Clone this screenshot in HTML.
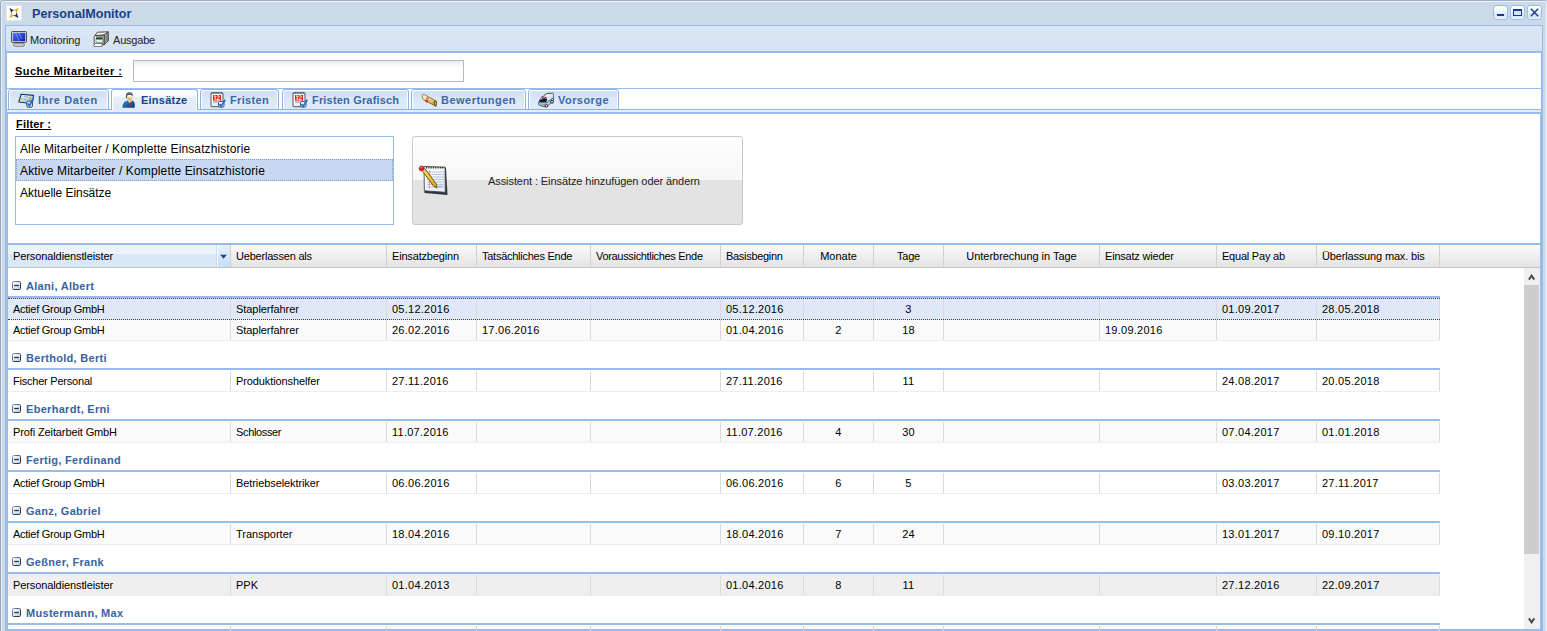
<!DOCTYPE html><html><head><meta charset="utf-8"><title>PersonalMonitor</title><style>
*{box-sizing:border-box;margin:0;padding:0}
html,body{width:1547px;height:631px;overflow:hidden;background:#ccd9e7}
body{font-family:"Liberation Sans",sans-serif;font-size:11px;color:#000;position:relative}
.abs{position:absolute}
.t{position:absolute;white-space:nowrap;line-height:1}
</style></head><body>
<div class="abs" style="left:0px;top:0px;width:1547px;height:631px;background:#ccd9e7;border-radius:4px 4px 0 0;border-top:1px solid #9eafc6;border-left:1px solid #94a6bf"></div>
<div class="abs" style="left:1px;top:1px;width:1546px;height:630px;border-radius:3px 3px 0 0;border-top:1px solid #eef3f8;border-left:1px solid #e9eff6;border-right:1px solid #eef2f8"></div>
<div class="abs" style="left:6px;top:5px;width:16px;height:16px;background:#fff;border:1px solid #e4e6ec;box-shadow:inset 0 0 0 1px #fff"></div>
<svg class="abs" style="left:6px;top:5px" width="16" height="16" viewBox="0 0 16 16"><path d="M3.5 3 L8.6 5.4 L7.2 6.6 L5.4 8.6 Z" fill="#13305c"/>
<path d="M12.5 3 L7.4 5.4 L8.8 6.6 L10.6 8.6 Z" fill="#f6a800"/>
<path d="M3.5 13 L5.4 7.4 L7.2 9.4 L8.6 10.6 Z" fill="#f6a800"/>
<path d="M12.5 13 L10.6 7.4 L8.8 9.4 L7.4 10.6 Z" fill="#13305c"/>
<circle cx="8" cy="8" r="2.4" fill="#fff"/></svg>
<div class="t" style="left:32px;top:8px;font-size:12.6px;font-weight:bold;color:#15428b">PersonalMonitor</div>
<div class="abs" style="left:1493px;top:5px;width:15px;height:15px;border:1px solid #99bbe8;border-radius:3px;background:linear-gradient(#fff 0,#fff 2px,#f2f8fe 3px,#e6f0fc 7px,#d5e5fa 8px,#dcebfc 12px,#fff 13px)"></div>
<div class="abs" style="left:1497px;top:14px;width:7px;height:2px;background:#1d3590"></div>
<div class="abs" style="left:1510px;top:5px;width:15px;height:15px;border:1px solid #99bbe8;border-radius:3px;background:linear-gradient(#fff 0,#fff 2px,#f2f8fe 3px,#e6f0fc 7px,#d5e5fa 8px,#dcebfc 12px,#fff 13px)"></div>
<div class="abs" style="left:1513px;top:9px;width:9px;height:7px;border:1px solid #1d3590;border-top-width:2px;background:#d3e2f8"></div>
<div class="abs" style="left:1527px;top:5px;width:15px;height:15px;border:1px solid #99bbe8;border-radius:3px;background:linear-gradient(#fff 0,#fff 2px,#f2f8fe 3px,#e6f0fc 7px,#d5e5fa 8px,#dcebfc 12px,#fff 13px)"></div>
<svg class="abs" style="left:1530px;top:8px" width="9" height="9" viewBox="0 0 9 9"><path d="M0.8 0.8L8.2 8.2M8.2 0.8L0.8 8.2" stroke="#1d3590" stroke-width="1.4"/></svg>
<div class="abs" style="left:5px;top:25px;width:1538px;height:28px;border:1px solid #99bbe8;border-bottom-width:2px;background:linear-gradient(#dce7f5,#d5e2f2)"></div>
<svg class="abs" style="left:11px;top:31px" width="16" height="16" viewBox="0 0 16 16"><defs><linearGradient id="scr" x1="0" y1="0" x2="1" y2="1"><stop offset="0" stop-color="#5a78e8"/><stop offset="1" stop-color="#0018c8"/></linearGradient></defs>
<rect x="0.5" y="0.5" width="15" height="11" rx="0.8" fill="#d8d8d8" stroke="#505050"/>
<rect x="1.8" y="1.8" width="12.4" height="8.4" fill="url(#scr)"/>
<path d="M4.5 1.8L8.5 10.2M7.5 1.8L11 8" stroke="#8aa0ff" stroke-width="1" opacity="0.8"/>
<path d="M2.5 13.2 C4 12, 12 12, 13.5 13.2 L13 15 C11 15.6, 5 15.6, 3 15Z" fill="#d0d0d0" stroke="#606060" stroke-width="0.7"/></svg>
<div class="t" style="left:30px;top:35px;font-size:11px;color:#222;letter-spacing:-0.1px">Monitoring</div>
<svg class="abs" style="left:93px;top:31px" width="16" height="16" viewBox="0 0 16 16"><defs><linearGradient id="prf" x1="0" y1="0" x2="1" y2="0"><stop offset="0" stop-color="#f4f4f4"/><stop offset="1" stop-color="#b8b8b8"/></linearGradient>
<linearGradient id="prs" x1="0" y1="0" x2="1" y2="0"><stop offset="0" stop-color="#c8c8c8"/><stop offset="1" stop-color="#8a8a8a"/></linearGradient></defs>
<path d="M4.5 1.2 L15.2 0.8 L11.2 4.2 L1.8 4.6 Z" fill="#ececec" stroke="#2a2a2a" stroke-width="0.8" stroke-linejoin="round"/>
<path d="M11.2 4.2 L15.2 0.8 L15.4 9.8 L11 13.8 Z" fill="url(#prs)" stroke="#2a2a2a" stroke-width="0.8" stroke-linejoin="round"/>
<path d="M12.2 5 V11.5 M13.3 4 V10.6 M14.4 3 V9.6" stroke="#6a6a6a" stroke-width="0.5"/>
<path d="M1.8 4.6 L11.2 4.2 L11 13.8 L2 13.8 C1.4 13.8, 1.2 13.2, 1.2 12.6 L1.2 5.4 Z" fill="url(#prf)" stroke="#2a2a2a" stroke-width="0.8" stroke-linejoin="round"/>
<rect x="3" y="5.6" width="6.6" height="1.2" fill="#3a6a4a"/>
<rect x="3" y="7" width="6.6" height="1.4" fill="#2a3a5a"/>
<rect x="3" y="8.6" width="6.6" height="2.6" fill="#e8f0e8" stroke="#4a8a5a" stroke-width="0.5"/>
<path d="M0.6 14.4 L2.4 12.4 L9.6 12.4 L8.6 15.6 L1.2 15.6 Z" fill="#fafafa" stroke="#3a3a3a" stroke-width="0.7" stroke-linejoin="round"/></svg>
<div class="t" style="left:113px;top:35px;font-size:11px;color:#222;letter-spacing:-0.2px">Ausgabe</div>
<div class="abs" style="left:5px;top:53px;width:1538px;height:578px;background:#fff;border-left:2px solid #99bbe8;border-right:2px solid #99bbe8"></div>
<div class="t" style="left:15px;top:66px;font-size:11px;font-weight:bold;text-decoration:underline;letter-spacing:0.44px">Suche Mitarbeiter :</div>
<div class="abs" style="left:133px;top:60px;width:331px;height:22px;border:1px solid #b5b8c8;background:linear-gradient(#e9ecef 0,#fbfbfb 5px,#fff 8px)"></div>
<div class="abs" style="left:7px;top:88px;width:1534px;height:1px;background:#99bbe8"></div>
<div class="abs" style="left:7px;top:109px;width:1534px;height:1px;background:#8db2e3"></div>
<div class="abs" style="left:7px;top:110px;width:1534px;height:2px;background:#e4eefb"></div>
<div class="abs" style="left:5px;top:112px;width:1538px;height:519px;border-top:2px solid #99bbe8;border-left:3px solid #99bbe8;border-right:3px solid #99bbe8"></div>
<div class="abs" style="left:8px;top:89px;width:101px;height:21px;border:1px solid #8db2e3;border-radius:3px 3px 0 0;background:linear-gradient(#d2e0f4 0,#d6e3f5 7px,#dce8f8 8px,#e0ebfa 100%);box-shadow:inset 1px 1px 0 #fff,inset -1px 0 0 #fff"></div>
<div class="t" style="left:38px;top:95px;font-size:11px;font-weight:bold;letter-spacing:0.6px;color:#3b68a6">Ihre Daten</div>
<svg class="abs" style="left:18px;top:92px" width="16" height="16" viewBox="0 0 16 16"><defs><linearGradient id="cdg" x1="0" y1="0" x2="1" y2="1"><stop offset="0" stop-color="#e8f4fe"/><stop offset="1" stop-color="#8cc0ec"/></linearGradient></defs>
<path d="M3.2 2.2 L15.6 3.4 L14.2 11.8 L0.8 10 Z" fill="url(#cdg)" stroke="#14365e" stroke-width="1.1" stroke-linejoin="round"/>
<circle cx="3.6" cy="6.8" r="1.1" fill="#f4c800"/>
<path d="M6 4.6 L10 5 M5.6 7.4 L8.6 7.7" stroke="#8ab0d6" stroke-width="0.9"/>
<path d="M11.4 5.6 L13.6 4.8 L12.6 7.8 L10.6 7.4 Z" fill="#e0a020"/>
<rect x="8.8" y="9.2" width="5.6" height="6" rx="1.2" fill="#f2f6fa" stroke="#26323e" stroke-width="0.9"/>
<path d="M9.8 11.4 L11.4 13.8 L15.2 6.6" stroke="#1a6cd0" stroke-width="1.8" fill="none" stroke-linejoin="round"/></svg>
<div class="abs" style="left:111px;top:89px;width:87px;height:21px;border:1px solid #8db2e3;border-bottom:none;border-radius:3px 3px 0 0;background:linear-gradient(#fff 0,#fafcfe 5px,#e6eefa 8px,#dfe9f8 100%);box-shadow:inset 1px 1px 0 #fff,inset -1px 0 0 #fff"></div>
<div class="t" style="left:141px;top:95px;font-size:11px;font-weight:bold;letter-spacing:0.23px;color:#15428b">Einsätze</div>
<svg class="abs" style="left:121px;top:92px" width="16" height="16" viewBox="0 0 16 16"><defs><linearGradient id="suit" x1="0" y1="0" x2="1" y2="1"><stop offset="0" stop-color="#4a8ccc"/><stop offset="0.6" stop-color="#1a5596"/><stop offset="1" stop-color="#0c3062"/></linearGradient>
<linearGradient id="face" x1="0" y1="0" x2="0" y2="1"><stop offset="0" stop-color="#ffe7a0"/><stop offset="1" stop-color="#d99a3a"/></linearGradient></defs>
<path d="M1.5 15.8 C1.2 11.5, 3 9.2, 6.5 8.4 L9 10 L11.5 8.6 C13.5 9.5, 14.2 11.5, 13.6 15.8 Z" fill="url(#suit)"/>
<path d="M7 8.8 L9.2 11.5 L10.8 8.8 Z" fill="#fff"/>
<path d="M8.8 9.6 L9.8 9.6 L10.4 14.2 L9.5 15 Z" fill="#c42c24"/>
<path d="M5.6 4.5 C5.6 7.5, 7 8.8, 8.6 8.8 C10.4 8.8, 11.6 7.2, 11.6 4.5 Z" fill="url(#face)"/>
<path d="M5 6 C4.4 2, 6 0.3, 8.5 0.3 C11 0.3, 12.2 1.6, 11.8 4.2 C11 3, 8.5 2.6, 6.4 3.2 C6 4, 5.9 5, 6 6.4 Z" fill="#46566a"/>
<path d="M6.5 1.6 C8 1, 10 1.2, 11 2" stroke="#8a9ab0" stroke-width="0.6" fill="none"/></svg>
<div class="abs" style="left:200px;top:89px;width:79px;height:21px;border:1px solid #8db2e3;border-radius:3px 3px 0 0;background:linear-gradient(#d2e0f4 0,#d6e3f5 7px,#dce8f8 8px,#e0ebfa 100%);box-shadow:inset 1px 1px 0 #fff,inset -1px 0 0 #fff"></div>
<div class="t" style="left:230px;top:95px;font-size:11px;font-weight:bold;letter-spacing:0.33px;color:#3b68a6">Fristen</div>
<svg class="abs" style="left:210px;top:92px" width="16" height="16" viewBox="0 0 16 16"><defs><linearGradient id="calg" x1="0" y1="0" x2="1" y2="1"><stop offset="0" stop-color="#ffffff"/><stop offset="1" stop-color="#e2e6ea"/></linearGradient></defs>
<path d="M1 1 H13 V14.5 H1 Z" fill="url(#calg)" stroke="#5a5a5a" stroke-width="1"/>
<path d="M13.5 1.5 V15 H1.5" stroke="#9a9a9a" stroke-width="0.8" fill="none"/>
<path d="M1.5 0.8 H12.5" stroke="#333" stroke-width="1" stroke-dasharray="1 0.6"/>
<rect x="3" y="3" width="8" height="5.6" fill="#e02a0a"/>
<path d="M4.2 4.3 L5.2 3.7 V8" stroke="#fff" stroke-width="1" fill="none"/>
<path d="M6.6 4.5 C6.9 3.5, 9.6 3.4, 9.3 4.9 C9.1 5.8, 7 6.6, 6.8 7.8 H9.8" stroke="#fff" stroke-width="1" fill="none"/>
<path d="M3 10 H8" stroke="#5c9ae0" stroke-width="1"/>
<rect x="8.5" y="9.5" width="5.5" height="5.5" rx="1.2" fill="#f4f8fc" stroke="#3a4450" stroke-width="0.9"/>
<path d="M9.4 12 L11.2 14.3 L15.3 7.6" stroke="#1a6cd0" stroke-width="1.7" fill="none" stroke-linejoin="round"/></svg>
<div class="abs" style="left:282px;top:89px;width:127px;height:21px;border:1px solid #8db2e3;border-radius:3px 3px 0 0;background:linear-gradient(#d2e0f4 0,#d6e3f5 7px,#dce8f8 8px,#e0ebfa 100%);box-shadow:inset 1px 1px 0 #fff,inset -1px 0 0 #fff"></div>
<div class="t" style="left:312px;top:95px;font-size:11px;font-weight:bold;letter-spacing:0.18px;color:#3b68a6">Fristen Grafisch</div>
<svg class="abs" style="left:292px;top:92px" width="16" height="16" viewBox="0 0 16 16"><defs><linearGradient id="calg" x1="0" y1="0" x2="1" y2="1"><stop offset="0" stop-color="#ffffff"/><stop offset="1" stop-color="#e2e6ea"/></linearGradient></defs>
<path d="M1 1 H13 V14.5 H1 Z" fill="url(#calg)" stroke="#5a5a5a" stroke-width="1"/>
<path d="M13.5 1.5 V15 H1.5" stroke="#9a9a9a" stroke-width="0.8" fill="none"/>
<path d="M1.5 0.8 H12.5" stroke="#333" stroke-width="1" stroke-dasharray="1 0.6"/>
<rect x="3" y="3" width="8" height="5.6" fill="#e02a0a"/>
<path d="M4.2 4.3 L5.2 3.7 V8" stroke="#fff" stroke-width="1" fill="none"/>
<path d="M6.6 4.5 C6.9 3.5, 9.6 3.4, 9.3 4.9 C9.1 5.8, 7 6.6, 6.8 7.8 H9.8" stroke="#fff" stroke-width="1" fill="none"/>
<path d="M3 10 H8" stroke="#5c9ae0" stroke-width="1"/>
<rect x="8.5" y="9.5" width="5.5" height="5.5" rx="1.2" fill="#f4f8fc" stroke="#3a4450" stroke-width="0.9"/>
<path d="M9.4 12 L11.2 14.3 L15.3 7.6" stroke="#1a6cd0" stroke-width="1.7" fill="none" stroke-linejoin="round"/></svg>
<div class="abs" style="left:411px;top:89px;width:115px;height:21px;border:1px solid #8db2e3;border-radius:3px 3px 0 0;background:linear-gradient(#d2e0f4 0,#d6e3f5 7px,#dce8f8 8px,#e0ebfa 100%);box-shadow:inset 1px 1px 0 #fff,inset -1px 0 0 #fff"></div>
<div class="t" style="left:441px;top:95px;font-size:11px;font-weight:bold;letter-spacing:0.48px;color:#3b68a6">Bewertungen</div>
<svg class="abs" style="left:421px;top:92px" width="16" height="16" viewBox="0 0 16 16"><g transform="translate(0,1)"><defs><linearGradient id="scg" x1="0" y1="0" x2="0.3" y2="1"><stop offset="0" stop-color="#fffbe0"/><stop offset="0.45" stop-color="#f6e08a"/><stop offset="1" stop-color="#c89a30"/></linearGradient></defs>
<path d="M1.3 3.2 C1 2, 2.2 1.2, 3.2 1.6 L15 7.8 C15.8 8.6, 15.6 12, 14.6 13.2 L2.6 6.8 C1.6 6.2, 1.2 4.8, 1.3 3.2 Z" fill="url(#scg)" stroke="#5a4a2a" stroke-width="0.7" stroke-linejoin="round"/>
<ellipse cx="14.6" cy="10.5" rx="1.2" ry="2.7" transform="rotate(-15 14.6 10.5)" fill="#d4a838" stroke="#4a3a1a" stroke-width="0.7"/>
<circle cx="6.6" cy="5.8" r="1.7" fill="#ec7a7a"/>
<circle cx="5.8" cy="8" r="1.6" fill="#c43c3c"/>
<circle cx="6.8" cy="6.6" r="1" fill="#f49a9a"/></g></svg>
<div class="abs" style="left:528px;top:89px;width:91px;height:21px;border:1px solid #8db2e3;border-radius:3px 3px 0 0;background:linear-gradient(#d2e0f4 0,#d6e3f5 7px,#dce8f8 8px,#e0ebfa 100%);box-shadow:inset 1px 1px 0 #fff,inset -1px 0 0 #fff"></div>
<div class="t" style="left:558px;top:95px;font-size:11px;font-weight:bold;letter-spacing:0.45px;color:#3b68a6">Vorsorge</div>
<svg class="abs" style="left:538px;top:92px" width="16" height="16" viewBox="0 0 16 16"><defs><linearGradient id="ambg" x1="0" y1="0" x2="1" y2="1"><stop offset="0" stop-color="#ffffff"/><stop offset="1" stop-color="#c4c8cc"/></linearGradient></defs>
<path d="M2.5 6.6 L8.6 1.6 L14.6 1.2 C15.6 1.4, 15.8 2.2, 15.7 3.4 L15.5 8.2 L10 13.6 L7.5 14.8 L1.4 13.4 C0.6 13, 0.4 12, 0.7 10.6 Z" fill="url(#ambg)" stroke="#2a2a2a" stroke-width="0.8" stroke-linejoin="round"/>
<path d="M2 8.2 L5 6 L9.2 6.8 L8.4 10.4 L1.4 10 Z" fill="#10161e"/>
<path d="M3 8 L5.6 6.6" stroke="#4a6a9a" stroke-width="0.6"/>
<path d="M0.8 10.4 L8.6 11 L15.5 5.6" stroke="#2a86d8" stroke-width="1.1" fill="none"/>
<rect x="3.6" y="4.2" width="1.6" height="1.5" fill="#d81c1c"/><rect x="5.3" y="4.5" width="1.5" height="1.3" fill="#2a7ae0"/><rect x="6.9" y="4.9" width="1.6" height="1.5" fill="#d81c1c"/>
<path d="M1.2 11.8 L7 12.6" stroke="#555" stroke-width="0.6"/>
<circle cx="14" cy="9.8" r="1.4" fill="#fff" stroke="#1a1a1a" stroke-width="1"/>
<circle cx="8.4" cy="13.8" r="1.3" fill="#fff" stroke="#1a1a1a" stroke-width="1"/></svg>
<div class="t" style="left:16px;top:119px;font-size:11px;font-weight:bold;text-decoration:underline;letter-spacing:0.2px">Filter :</div>
<div class="abs" style="left:15px;top:136px;width:379px;height:89px;border:1px solid #99bbe8;background:#fff"></div>
<div class="abs" style="left:16px;top:159px;width:377px;height:22px;background:#c8d8f0;border:1px dotted #7f9fd0"></div>
<div class="t" style="left:20px;top:143px;font-size:12px;letter-spacing:0.11px">Alle Mitarbeiter / Komplette Einsatzhistorie</div>
<div class="t" style="left:20px;top:165px;font-size:12px;letter-spacing:0.15px">Aktive Mitarbeiter / Komplette Einsatzhistorie</div>
<div class="t" style="left:20px;top:187px;font-size:12px;letter-spacing:-0.06px">Aktuelle Einsätze</div>
<div class="abs" style="left:412px;top:136px;width:331px;height:89px;border:1px solid #c9c9c9;border-radius:3px;background:linear-gradient(#fdfdfd 0,#f7f7f7 50%,#e3e3e3 50%,#e3e3e3 100%)"></div>
<div class="t" style="left:488px;top:176px;font-size:11px;color:#222;letter-spacing:-0.08px">Assistent : Einsätze hinzufügen oder ändern</div>
<svg class="abs" style="left:418px;top:164px" width="32" height="32" viewBox="0 0 32 32"><defs><linearGradient id="pg" x1="0" y1="0" x2="1" y2="1"><stop offset="0" stop-color="#ffffff"/><stop offset="1" stop-color="#e6ebf2"/></linearGradient>
<linearGradient id="pen" x1="0" y1="0" x2="1" y2="1"><stop offset="0" stop-color="#ffe45a"/><stop offset="1" stop-color="#e0a000"/></linearGradient></defs>
<path d="M6 2.5 L28 3.5 L29.5 31 L6.5 29 Z" fill="#2e3440"/>
<path d="M6 2.5 L27 3.2 L27.3 28.3 L6.3 26.8 Z" fill="url(#pg)" stroke="#3a4048" stroke-width="0.8"/>
<path d="M9 8H26M9 10.5H26M9 13H26M9 15.5H26M9 18H26M9 20.5H26M9 23H26" stroke="#a6bcdc" stroke-width="0.8"/>
<path d="M11.5 6 V25" stroke="#f29090" stroke-width="0.9"/>
<path d="M8 3.6H26.5" stroke="#222" stroke-width="1.6" stroke-dasharray="1.1 1.2"/>
<path d="M4.6 7.2 L7.2 4.8 L18.6 20.4 L18.8 24 L15.8 22.4 Z" fill="url(#pen)" stroke="#4a3a10" stroke-width="0.8" stroke-linejoin="round"/>
<path d="M2.8 6.2 L5.4 3.8 L7.6 6 L5 8.4 Z" fill="#f4f4f4" stroke="#555" stroke-width="0.6"/>
<circle cx="3.6" cy="4.4" r="2.5" fill="#e41c1c" stroke="#8a1010" stroke-width="0.5"/>
<circle cx="3" cy="3.6" r="0.8" fill="#ff9a9a"/>
<path d="M18.5 23.5 C20 22.8, 22 22.5, 24 22" stroke="#888" stroke-width="0.8" fill="none"/></svg>
<div class="abs" style="left:8px;top:243px;width:1532px;height:2px;background:#99bbe8"></div>
<div class="abs" style="left:8px;top:245px;width:1532px;height:23px;background:linear-gradient(#fafafa 0,#eeeeef 55%,#e3e3e5 100%);border-bottom:1px solid #c4c4c4"></div>
<div class="abs" style="left:8px;top:245px;width:222px;height:22px;background:linear-gradient(#ecf3fd 0,#ebf3fd 9px,#dae7f8 9px,#d9e7f8 100%)"></div>
<div class="abs" style="left:216px;top:245px;width:14px;height:22px;background:linear-gradient(#e6f1fd,#c6def9);border-left:1px solid #c9daf0;box-shadow:inset 1px 0 0 #fff"></div>
<svg class="abs" style="left:219px;top:254px" width="9" height="6" viewBox="0 0 9 6"><path d="M0.8 0.6H8.2L4.5 5Z" fill="#15428b" stroke="#fff" stroke-width="0.6" stroke-opacity="0.6"/></svg>
<div class="abs" style="left:230px;top:245px;width:1px;height:22px;background:#d0d0d0"></div>
<div class="abs" style="left:386px;top:245px;width:1px;height:22px;background:#d0d0d0"></div>
<div class="abs" style="left:476px;top:245px;width:1px;height:22px;background:#d0d0d0"></div>
<div class="abs" style="left:590px;top:245px;width:1px;height:22px;background:#d0d0d0"></div>
<div class="abs" style="left:720px;top:245px;width:1px;height:22px;background:#d0d0d0"></div>
<div class="abs" style="left:803px;top:245px;width:1px;height:22px;background:#d0d0d0"></div>
<div class="abs" style="left:873px;top:245px;width:1px;height:22px;background:#d0d0d0"></div>
<div class="abs" style="left:943px;top:245px;width:1px;height:22px;background:#d0d0d0"></div>
<div class="abs" style="left:1099px;top:245px;width:1px;height:22px;background:#d0d0d0"></div>
<div class="abs" style="left:1216px;top:245px;width:1px;height:22px;background:#d0d0d0"></div>
<div class="abs" style="left:1316px;top:245px;width:1px;height:22px;background:#d0d0d0"></div>
<div class="abs" style="left:1439px;top:245px;width:1px;height:22px;background:#d0d0d0"></div>
<div class="t" style="left:13px;top:251px;font-size:11px;letter-spacing:-0.1px">Personaldienstleister</div>
<div class="t" style="left:236px;top:251px;font-size:11px;letter-spacing:-0.2px">Ueberlassen als</div>
<div class="t" style="left:392px;top:251px;font-size:11px;letter-spacing:-0.175px">Einsatzbeginn</div>
<div class="t" style="left:482px;top:251px;font-size:11px;letter-spacing:-0.26px">Tatsächliches Ende</div>
<div class="t" style="left:596px;top:251px;font-size:11px;letter-spacing:-0.32px">Voraussichtliches Ende</div>
<div class="t" style="left:726px;top:251px;font-size:11px;letter-spacing:-0.3px">Basisbeginn</div>
<div class="t" style="left:804px;width:69px;text-align:center;top:251px;font-size:11px;letter-spacing:0px">Monate</div>
<div class="t" style="left:874px;width:69px;text-align:center;top:251px;font-size:11px;letter-spacing:-0.2px">Tage</div>
<div class="t" style="left:944px;width:155px;text-align:center;top:251px;font-size:11px;letter-spacing:-0.04px">Unterbrechung in Tage</div>
<div class="t" style="left:1105px;top:251px;font-size:11px;letter-spacing:-0.2px">Einsatz wieder</div>
<div class="t" style="left:1222px;top:251px;font-size:11px;letter-spacing:-0.22px">Equal Pay ab</div>
<div class="t" style="left:1322px;top:251px;font-size:11px;letter-spacing:-0.16px">Überlassung max. bis</div>
<svg class="abs" style="left:12px;top:281px" width="9" height="9" viewBox="0 0 9 9"><defs><linearGradient id="gi0" x1="0" y1="0" x2="1" y2="1"><stop offset="0" stop-color="#ffffff"/><stop offset="1" stop-color="#bccadc"/></linearGradient><linearGradient id="gs0" x1="0" y1="0" x2="1" y2="1"><stop offset="0" stop-color="#8a9ab2"/><stop offset="0.6" stop-color="#34465e"/><stop offset="1" stop-color="#22344c"/></linearGradient></defs><rect x="0.5" y="0.5" width="8" height="8" rx="1.2" fill="url(#gi0)" stroke="url(#gs0)"/><path d="M2.2 4.5H6.8" stroke="#1e2f48" stroke-width="1.2"/></svg>
<div class="t" style="left:26px;top:281px;font-size:11px;font-weight:bold;letter-spacing:0.3px;color:#3764a0">Alani, Albert</div>
<div class="abs" style="left:8px;top:296px;width:1432px;height:2px;background:#99bbe8"></div>
<div class="abs" style="left:8px;top:298px;width:1432px;height:22px;background:#dfe8f6;border-top:1px dotted #404040;border-bottom:1px dotted #404040;z-index:2"></div>
<div class="abs" style="left:230px;top:299px;width:1px;height:20px;background:#dadada;z-index:3"></div>
<div class="abs" style="left:386px;top:299px;width:1px;height:20px;background:#dadada;z-index:3"></div>
<div class="abs" style="left:476px;top:299px;width:1px;height:20px;background:#dadada;z-index:3"></div>
<div class="abs" style="left:590px;top:299px;width:1px;height:20px;background:#dadada;z-index:3"></div>
<div class="abs" style="left:720px;top:299px;width:1px;height:20px;background:#dadada;z-index:3"></div>
<div class="abs" style="left:803px;top:299px;width:1px;height:20px;background:#dadada;z-index:3"></div>
<div class="abs" style="left:873px;top:299px;width:1px;height:20px;background:#dadada;z-index:3"></div>
<div class="abs" style="left:943px;top:299px;width:1px;height:20px;background:#dadada;z-index:3"></div>
<div class="abs" style="left:1099px;top:299px;width:1px;height:20px;background:#dadada;z-index:3"></div>
<div class="abs" style="left:1216px;top:299px;width:1px;height:20px;background:#dadada;z-index:3"></div>
<div class="abs" style="left:1316px;top:299px;width:1px;height:20px;background:#dadada;z-index:3"></div>
<div class="abs" style="left:1439px;top:299px;width:1px;height:20px;background:#dadada;z-index:3"></div>
<div class="t" style="left:13px;top:304px;font-size:11px;letter-spacing:-0.26px;z-index:4">Actief Group GmbH</div>
<div class="t" style="left:236px;top:304px;font-size:11px;letter-spacing:-0.06px;z-index:4">Staplerfahrer</div>
<div class="t" style="left:392px;top:304px;font-size:11px;letter-spacing:0.25px;z-index:4">05.12.2016</div>
<div class="t" style="left:726px;top:304px;font-size:11px;letter-spacing:0.25px;z-index:4">05.12.2016</div>
<div class="t" style="left:874px;width:69px;text-align:center;top:304px;font-size:11px;letter-spacing:0.25px;z-index:4">3</div>
<div class="t" style="left:1222px;top:304px;font-size:11px;letter-spacing:0.25px;z-index:4">01.09.2017</div>
<div class="t" style="left:1322px;top:304px;font-size:11px;letter-spacing:0.25px;z-index:4">28.05.2018</div>
<div class="abs" style="left:8px;top:319px;width:1432px;height:22px;background:#fafafa;border-bottom:1px solid #ededed"></div>
<div class="abs" style="left:230px;top:320px;width:1px;height:20px;background:#dadada;z-index:3"></div>
<div class="abs" style="left:386px;top:320px;width:1px;height:20px;background:#dadada;z-index:3"></div>
<div class="abs" style="left:476px;top:320px;width:1px;height:20px;background:#dadada;z-index:3"></div>
<div class="abs" style="left:590px;top:320px;width:1px;height:20px;background:#dadada;z-index:3"></div>
<div class="abs" style="left:720px;top:320px;width:1px;height:20px;background:#dadada;z-index:3"></div>
<div class="abs" style="left:803px;top:320px;width:1px;height:20px;background:#dadada;z-index:3"></div>
<div class="abs" style="left:873px;top:320px;width:1px;height:20px;background:#dadada;z-index:3"></div>
<div class="abs" style="left:943px;top:320px;width:1px;height:20px;background:#dadada;z-index:3"></div>
<div class="abs" style="left:1099px;top:320px;width:1px;height:20px;background:#dadada;z-index:3"></div>
<div class="abs" style="left:1216px;top:320px;width:1px;height:20px;background:#dadada;z-index:3"></div>
<div class="abs" style="left:1316px;top:320px;width:1px;height:20px;background:#dadada;z-index:3"></div>
<div class="abs" style="left:1439px;top:320px;width:1px;height:20px;background:#dadada;z-index:3"></div>
<div class="t" style="left:13px;top:325px;font-size:11px;letter-spacing:-0.26px;z-index:4">Actief Group GmbH</div>
<div class="t" style="left:236px;top:325px;font-size:11px;letter-spacing:-0.06px;z-index:4">Staplerfahrer</div>
<div class="t" style="left:392px;top:325px;font-size:11px;letter-spacing:0.25px;z-index:4">26.02.2016</div>
<div class="t" style="left:482px;top:325px;font-size:11px;letter-spacing:0.25px;z-index:4">17.06.2016</div>
<div class="t" style="left:726px;top:325px;font-size:11px;letter-spacing:0.25px;z-index:4">01.04.2016</div>
<div class="t" style="left:804px;width:69px;text-align:center;top:325px;font-size:11px;letter-spacing:0.25px;z-index:4">2</div>
<div class="t" style="left:874px;width:69px;text-align:center;top:325px;font-size:11px;letter-spacing:0.25px;z-index:4">18</div>
<div class="t" style="left:1105px;top:325px;font-size:11px;letter-spacing:0.25px;z-index:4">19.09.2016</div>
<svg class="abs" style="left:12px;top:353px" width="9" height="9" viewBox="0 0 9 9"><defs><linearGradient id="gi1" x1="0" y1="0" x2="1" y2="1"><stop offset="0" stop-color="#ffffff"/><stop offset="1" stop-color="#bccadc"/></linearGradient><linearGradient id="gs1" x1="0" y1="0" x2="1" y2="1"><stop offset="0" stop-color="#8a9ab2"/><stop offset="0.6" stop-color="#34465e"/><stop offset="1" stop-color="#22344c"/></linearGradient></defs><rect x="0.5" y="0.5" width="8" height="8" rx="1.2" fill="url(#gi1)" stroke="url(#gs1)"/><path d="M2.2 4.5H6.8" stroke="#1e2f48" stroke-width="1.2"/></svg>
<div class="t" style="left:26px;top:353px;font-size:11px;font-weight:bold;letter-spacing:0.3px;color:#3764a0">Berthold, Berti</div>
<div class="abs" style="left:8px;top:368px;width:1432px;height:2px;background:#99bbe8"></div>
<div class="abs" style="left:8px;top:370px;width:1432px;height:22px;background:#ffffff;border-bottom:1px solid #ededed"></div>
<div class="abs" style="left:230px;top:371px;width:1px;height:20px;background:#dadada;z-index:3"></div>
<div class="abs" style="left:386px;top:371px;width:1px;height:20px;background:#dadada;z-index:3"></div>
<div class="abs" style="left:476px;top:371px;width:1px;height:20px;background:#dadada;z-index:3"></div>
<div class="abs" style="left:590px;top:371px;width:1px;height:20px;background:#dadada;z-index:3"></div>
<div class="abs" style="left:720px;top:371px;width:1px;height:20px;background:#dadada;z-index:3"></div>
<div class="abs" style="left:803px;top:371px;width:1px;height:20px;background:#dadada;z-index:3"></div>
<div class="abs" style="left:873px;top:371px;width:1px;height:20px;background:#dadada;z-index:3"></div>
<div class="abs" style="left:943px;top:371px;width:1px;height:20px;background:#dadada;z-index:3"></div>
<div class="abs" style="left:1099px;top:371px;width:1px;height:20px;background:#dadada;z-index:3"></div>
<div class="abs" style="left:1216px;top:371px;width:1px;height:20px;background:#dadada;z-index:3"></div>
<div class="abs" style="left:1316px;top:371px;width:1px;height:20px;background:#dadada;z-index:3"></div>
<div class="abs" style="left:1439px;top:371px;width:1px;height:20px;background:#dadada;z-index:3"></div>
<div class="t" style="left:13px;top:376px;font-size:11px;letter-spacing:-0.22px;z-index:4">Fischer Personal</div>
<div class="t" style="left:236px;top:376px;font-size:11px;letter-spacing:-0.1px;z-index:4">Produktionshelfer</div>
<div class="t" style="left:392px;top:376px;font-size:11px;letter-spacing:0.25px;z-index:4">27.11.2016</div>
<div class="t" style="left:726px;top:376px;font-size:11px;letter-spacing:0.25px;z-index:4">27.11.2016</div>
<div class="t" style="left:874px;width:69px;text-align:center;top:376px;font-size:11px;letter-spacing:0.25px;z-index:4">11</div>
<div class="t" style="left:1222px;top:376px;font-size:11px;letter-spacing:0.25px;z-index:4">24.08.2017</div>
<div class="t" style="left:1322px;top:376px;font-size:11px;letter-spacing:0.25px;z-index:4">20.05.2018</div>
<svg class="abs" style="left:12px;top:404px" width="9" height="9" viewBox="0 0 9 9"><defs><linearGradient id="gi2" x1="0" y1="0" x2="1" y2="1"><stop offset="0" stop-color="#ffffff"/><stop offset="1" stop-color="#bccadc"/></linearGradient><linearGradient id="gs2" x1="0" y1="0" x2="1" y2="1"><stop offset="0" stop-color="#8a9ab2"/><stop offset="0.6" stop-color="#34465e"/><stop offset="1" stop-color="#22344c"/></linearGradient></defs><rect x="0.5" y="0.5" width="8" height="8" rx="1.2" fill="url(#gi2)" stroke="url(#gs2)"/><path d="M2.2 4.5H6.8" stroke="#1e2f48" stroke-width="1.2"/></svg>
<div class="t" style="left:26px;top:404px;font-size:11px;font-weight:bold;letter-spacing:0.3px;color:#3764a0">Eberhardt, Erni</div>
<div class="abs" style="left:8px;top:419px;width:1432px;height:2px;background:#99bbe8"></div>
<div class="abs" style="left:8px;top:421px;width:1432px;height:22px;background:#fafafa;border-bottom:1px solid #ededed"></div>
<div class="abs" style="left:230px;top:422px;width:1px;height:20px;background:#dadada;z-index:3"></div>
<div class="abs" style="left:386px;top:422px;width:1px;height:20px;background:#dadada;z-index:3"></div>
<div class="abs" style="left:476px;top:422px;width:1px;height:20px;background:#dadada;z-index:3"></div>
<div class="abs" style="left:590px;top:422px;width:1px;height:20px;background:#dadada;z-index:3"></div>
<div class="abs" style="left:720px;top:422px;width:1px;height:20px;background:#dadada;z-index:3"></div>
<div class="abs" style="left:803px;top:422px;width:1px;height:20px;background:#dadada;z-index:3"></div>
<div class="abs" style="left:873px;top:422px;width:1px;height:20px;background:#dadada;z-index:3"></div>
<div class="abs" style="left:943px;top:422px;width:1px;height:20px;background:#dadada;z-index:3"></div>
<div class="abs" style="left:1099px;top:422px;width:1px;height:20px;background:#dadada;z-index:3"></div>
<div class="abs" style="left:1216px;top:422px;width:1px;height:20px;background:#dadada;z-index:3"></div>
<div class="abs" style="left:1316px;top:422px;width:1px;height:20px;background:#dadada;z-index:3"></div>
<div class="abs" style="left:1439px;top:422px;width:1px;height:20px;background:#dadada;z-index:3"></div>
<div class="t" style="left:13px;top:427px;font-size:11px;letter-spacing:-0.115px;z-index:4">Profi Zeitarbeit GmbH</div>
<div class="t" style="left:236px;top:427px;font-size:11px;letter-spacing:-0.35px;z-index:4">Schlosser</div>
<div class="t" style="left:392px;top:427px;font-size:11px;letter-spacing:0.25px;z-index:4">11.07.2016</div>
<div class="t" style="left:726px;top:427px;font-size:11px;letter-spacing:0.25px;z-index:4">11.07.2016</div>
<div class="t" style="left:804px;width:69px;text-align:center;top:427px;font-size:11px;letter-spacing:0.25px;z-index:4">4</div>
<div class="t" style="left:874px;width:69px;text-align:center;top:427px;font-size:11px;letter-spacing:0.25px;z-index:4">30</div>
<div class="t" style="left:1222px;top:427px;font-size:11px;letter-spacing:0.25px;z-index:4">07.04.2017</div>
<div class="t" style="left:1322px;top:427px;font-size:11px;letter-spacing:0.25px;z-index:4">01.01.2018</div>
<svg class="abs" style="left:12px;top:455px" width="9" height="9" viewBox="0 0 9 9"><defs><linearGradient id="gi3" x1="0" y1="0" x2="1" y2="1"><stop offset="0" stop-color="#ffffff"/><stop offset="1" stop-color="#bccadc"/></linearGradient><linearGradient id="gs3" x1="0" y1="0" x2="1" y2="1"><stop offset="0" stop-color="#8a9ab2"/><stop offset="0.6" stop-color="#34465e"/><stop offset="1" stop-color="#22344c"/></linearGradient></defs><rect x="0.5" y="0.5" width="8" height="8" rx="1.2" fill="url(#gi3)" stroke="url(#gs3)"/><path d="M2.2 4.5H6.8" stroke="#1e2f48" stroke-width="1.2"/></svg>
<div class="t" style="left:26px;top:455px;font-size:11px;font-weight:bold;letter-spacing:0.3px;color:#3764a0">Fertig, Ferdinand</div>
<div class="abs" style="left:8px;top:470px;width:1432px;height:2px;background:#99bbe8"></div>
<div class="abs" style="left:8px;top:472px;width:1432px;height:22px;background:#ffffff;border-bottom:1px solid #ededed"></div>
<div class="abs" style="left:230px;top:473px;width:1px;height:20px;background:#dadada;z-index:3"></div>
<div class="abs" style="left:386px;top:473px;width:1px;height:20px;background:#dadada;z-index:3"></div>
<div class="abs" style="left:476px;top:473px;width:1px;height:20px;background:#dadada;z-index:3"></div>
<div class="abs" style="left:590px;top:473px;width:1px;height:20px;background:#dadada;z-index:3"></div>
<div class="abs" style="left:720px;top:473px;width:1px;height:20px;background:#dadada;z-index:3"></div>
<div class="abs" style="left:803px;top:473px;width:1px;height:20px;background:#dadada;z-index:3"></div>
<div class="abs" style="left:873px;top:473px;width:1px;height:20px;background:#dadada;z-index:3"></div>
<div class="abs" style="left:943px;top:473px;width:1px;height:20px;background:#dadada;z-index:3"></div>
<div class="abs" style="left:1099px;top:473px;width:1px;height:20px;background:#dadada;z-index:3"></div>
<div class="abs" style="left:1216px;top:473px;width:1px;height:20px;background:#dadada;z-index:3"></div>
<div class="abs" style="left:1316px;top:473px;width:1px;height:20px;background:#dadada;z-index:3"></div>
<div class="abs" style="left:1439px;top:473px;width:1px;height:20px;background:#dadada;z-index:3"></div>
<div class="t" style="left:13px;top:478px;font-size:11px;letter-spacing:-0.26px;z-index:4">Actief Group GmbH</div>
<div class="t" style="left:236px;top:478px;font-size:11px;letter-spacing:-0.09px;z-index:4">Betriebselektriker</div>
<div class="t" style="left:392px;top:478px;font-size:11px;letter-spacing:0.25px;z-index:4">06.06.2016</div>
<div class="t" style="left:726px;top:478px;font-size:11px;letter-spacing:0.25px;z-index:4">06.06.2016</div>
<div class="t" style="left:804px;width:69px;text-align:center;top:478px;font-size:11px;letter-spacing:0.25px;z-index:4">6</div>
<div class="t" style="left:874px;width:69px;text-align:center;top:478px;font-size:11px;letter-spacing:0.25px;z-index:4">5</div>
<div class="t" style="left:1222px;top:478px;font-size:11px;letter-spacing:0.25px;z-index:4">03.03.2017</div>
<div class="t" style="left:1322px;top:478px;font-size:11px;letter-spacing:0.25px;z-index:4">27.11.2017</div>
<svg class="abs" style="left:12px;top:506px" width="9" height="9" viewBox="0 0 9 9"><defs><linearGradient id="gi4" x1="0" y1="0" x2="1" y2="1"><stop offset="0" stop-color="#ffffff"/><stop offset="1" stop-color="#bccadc"/></linearGradient><linearGradient id="gs4" x1="0" y1="0" x2="1" y2="1"><stop offset="0" stop-color="#8a9ab2"/><stop offset="0.6" stop-color="#34465e"/><stop offset="1" stop-color="#22344c"/></linearGradient></defs><rect x="0.5" y="0.5" width="8" height="8" rx="1.2" fill="url(#gi4)" stroke="url(#gs4)"/><path d="M2.2 4.5H6.8" stroke="#1e2f48" stroke-width="1.2"/></svg>
<div class="t" style="left:26px;top:506px;font-size:11px;font-weight:bold;letter-spacing:0.3px;color:#3764a0">Ganz, Gabriel</div>
<div class="abs" style="left:8px;top:521px;width:1432px;height:2px;background:#99bbe8"></div>
<div class="abs" style="left:8px;top:523px;width:1432px;height:22px;background:#fafafa;border-bottom:1px solid #ededed"></div>
<div class="abs" style="left:230px;top:524px;width:1px;height:20px;background:#dadada;z-index:3"></div>
<div class="abs" style="left:386px;top:524px;width:1px;height:20px;background:#dadada;z-index:3"></div>
<div class="abs" style="left:476px;top:524px;width:1px;height:20px;background:#dadada;z-index:3"></div>
<div class="abs" style="left:590px;top:524px;width:1px;height:20px;background:#dadada;z-index:3"></div>
<div class="abs" style="left:720px;top:524px;width:1px;height:20px;background:#dadada;z-index:3"></div>
<div class="abs" style="left:803px;top:524px;width:1px;height:20px;background:#dadada;z-index:3"></div>
<div class="abs" style="left:873px;top:524px;width:1px;height:20px;background:#dadada;z-index:3"></div>
<div class="abs" style="left:943px;top:524px;width:1px;height:20px;background:#dadada;z-index:3"></div>
<div class="abs" style="left:1099px;top:524px;width:1px;height:20px;background:#dadada;z-index:3"></div>
<div class="abs" style="left:1216px;top:524px;width:1px;height:20px;background:#dadada;z-index:3"></div>
<div class="abs" style="left:1316px;top:524px;width:1px;height:20px;background:#dadada;z-index:3"></div>
<div class="abs" style="left:1439px;top:524px;width:1px;height:20px;background:#dadada;z-index:3"></div>
<div class="t" style="left:13px;top:529px;font-size:11px;letter-spacing:-0.26px;z-index:4">Actief Group GmbH</div>
<div class="t" style="left:236px;top:529px;font-size:11px;letter-spacing:0px;z-index:4">Transporter</div>
<div class="t" style="left:392px;top:529px;font-size:11px;letter-spacing:0.25px;z-index:4">18.04.2016</div>
<div class="t" style="left:726px;top:529px;font-size:11px;letter-spacing:0.25px;z-index:4">18.04.2016</div>
<div class="t" style="left:804px;width:69px;text-align:center;top:529px;font-size:11px;letter-spacing:0.25px;z-index:4">7</div>
<div class="t" style="left:874px;width:69px;text-align:center;top:529px;font-size:11px;letter-spacing:0.25px;z-index:4">24</div>
<div class="t" style="left:1222px;top:529px;font-size:11px;letter-spacing:0.25px;z-index:4">13.01.2017</div>
<div class="t" style="left:1322px;top:529px;font-size:11px;letter-spacing:0.25px;z-index:4">09.10.2017</div>
<svg class="abs" style="left:12px;top:557px" width="9" height="9" viewBox="0 0 9 9"><defs><linearGradient id="gi5" x1="0" y1="0" x2="1" y2="1"><stop offset="0" stop-color="#ffffff"/><stop offset="1" stop-color="#bccadc"/></linearGradient><linearGradient id="gs5" x1="0" y1="0" x2="1" y2="1"><stop offset="0" stop-color="#8a9ab2"/><stop offset="0.6" stop-color="#34465e"/><stop offset="1" stop-color="#22344c"/></linearGradient></defs><rect x="0.5" y="0.5" width="8" height="8" rx="1.2" fill="url(#gi5)" stroke="url(#gs5)"/><path d="M2.2 4.5H6.8" stroke="#1e2f48" stroke-width="1.2"/></svg>
<div class="t" style="left:26px;top:557px;font-size:11px;font-weight:bold;letter-spacing:0.3px;color:#3764a0">Geßner, Frank</div>
<div class="abs" style="left:8px;top:572px;width:1432px;height:2px;background:#99bbe8"></div>
<div class="abs" style="left:8px;top:574px;width:1432px;height:22px;background:#efefef;border-bottom:1px solid #ededed"></div>
<div class="abs" style="left:230px;top:575px;width:1px;height:20px;background:#dadada;z-index:3"></div>
<div class="abs" style="left:386px;top:575px;width:1px;height:20px;background:#dadada;z-index:3"></div>
<div class="abs" style="left:476px;top:575px;width:1px;height:20px;background:#dadada;z-index:3"></div>
<div class="abs" style="left:590px;top:575px;width:1px;height:20px;background:#dadada;z-index:3"></div>
<div class="abs" style="left:720px;top:575px;width:1px;height:20px;background:#dadada;z-index:3"></div>
<div class="abs" style="left:803px;top:575px;width:1px;height:20px;background:#dadada;z-index:3"></div>
<div class="abs" style="left:873px;top:575px;width:1px;height:20px;background:#dadada;z-index:3"></div>
<div class="abs" style="left:943px;top:575px;width:1px;height:20px;background:#dadada;z-index:3"></div>
<div class="abs" style="left:1099px;top:575px;width:1px;height:20px;background:#dadada;z-index:3"></div>
<div class="abs" style="left:1216px;top:575px;width:1px;height:20px;background:#dadada;z-index:3"></div>
<div class="abs" style="left:1316px;top:575px;width:1px;height:20px;background:#dadada;z-index:3"></div>
<div class="abs" style="left:1439px;top:575px;width:1px;height:20px;background:#dadada;z-index:3"></div>
<div class="t" style="left:13px;top:580px;font-size:11px;letter-spacing:-0.1px;z-index:4">Personaldienstleister</div>
<div class="t" style="left:236px;top:580px;font-size:11px;letter-spacing:0px;z-index:4">PPK</div>
<div class="t" style="left:392px;top:580px;font-size:11px;letter-spacing:0.25px;z-index:4">01.04.2013</div>
<div class="t" style="left:726px;top:580px;font-size:11px;letter-spacing:0.25px;z-index:4">01.04.2016</div>
<div class="t" style="left:804px;width:69px;text-align:center;top:580px;font-size:11px;letter-spacing:0.25px;z-index:4">8</div>
<div class="t" style="left:874px;width:69px;text-align:center;top:580px;font-size:11px;letter-spacing:0.25px;z-index:4">11</div>
<div class="t" style="left:1222px;top:580px;font-size:11px;letter-spacing:0.25px;z-index:4">27.12.2016</div>
<div class="t" style="left:1322px;top:580px;font-size:11px;letter-spacing:0.25px;z-index:4">22.09.2017</div>
<svg class="abs" style="left:12px;top:608px" width="9" height="9" viewBox="0 0 9 9"><defs><linearGradient id="gi6" x1="0" y1="0" x2="1" y2="1"><stop offset="0" stop-color="#ffffff"/><stop offset="1" stop-color="#bccadc"/></linearGradient><linearGradient id="gs6" x1="0" y1="0" x2="1" y2="1"><stop offset="0" stop-color="#8a9ab2"/><stop offset="0.6" stop-color="#34465e"/><stop offset="1" stop-color="#22344c"/></linearGradient></defs><rect x="0.5" y="0.5" width="8" height="8" rx="1.2" fill="url(#gi6)" stroke="url(#gs6)"/><path d="M2.2 4.5H6.8" stroke="#1e2f48" stroke-width="1.2"/></svg>
<div class="t" style="left:26px;top:608px;font-size:11px;font-weight:bold;letter-spacing:0.3px;color:#3764a0">Mustermann, Max</div>
<div class="abs" style="left:8px;top:623px;width:1432px;height:2px;background:#99bbe8"></div>
<div class="abs" style="left:8px;top:625px;width:1432px;height:22px;background:#fafafa;border-bottom:1px solid #ededed"></div>
<div class="abs" style="left:230px;top:626px;width:1px;height:20px;background:#dadada;z-index:3"></div>
<div class="abs" style="left:386px;top:626px;width:1px;height:20px;background:#dadada;z-index:3"></div>
<div class="abs" style="left:476px;top:626px;width:1px;height:20px;background:#dadada;z-index:3"></div>
<div class="abs" style="left:590px;top:626px;width:1px;height:20px;background:#dadada;z-index:3"></div>
<div class="abs" style="left:720px;top:626px;width:1px;height:20px;background:#dadada;z-index:3"></div>
<div class="abs" style="left:803px;top:626px;width:1px;height:20px;background:#dadada;z-index:3"></div>
<div class="abs" style="left:873px;top:626px;width:1px;height:20px;background:#dadada;z-index:3"></div>
<div class="abs" style="left:943px;top:626px;width:1px;height:20px;background:#dadada;z-index:3"></div>
<div class="abs" style="left:1099px;top:626px;width:1px;height:20px;background:#dadada;z-index:3"></div>
<div class="abs" style="left:1216px;top:626px;width:1px;height:20px;background:#dadada;z-index:3"></div>
<div class="abs" style="left:1316px;top:626px;width:1px;height:20px;background:#dadada;z-index:3"></div>
<div class="abs" style="left:1439px;top:626px;width:1px;height:20px;background:#dadada;z-index:3"></div>
<div class="abs" style="left:1524px;top:268px;width:16px;height:361px;background:#f0f0f0"></div>
<div class="abs" style="left:1524px;top:285px;width:15px;height:269px;background:#cdcdcd"></div>
<svg class="abs" style="left:1528px;top:274px" width="8" height="7" viewBox="0 0 8 7"><path d="M0.9 5.6L3.6 1.6L6.3 5.6" stroke="#4a4a4a" stroke-width="1.9" fill="none"/></svg>
<svg class="abs" style="left:1528px;top:617px" width="8" height="7" viewBox="0 0 8 7"><path d="M0.9 1.4L3.6 5.4L6.3 1.4" stroke="#4a4a4a" stroke-width="1.9" fill="none"/></svg>
<div class="abs" style="left:5px;top:629px;width:1538px;height:2px;background:#99bbe8"></div>
</body></html>
